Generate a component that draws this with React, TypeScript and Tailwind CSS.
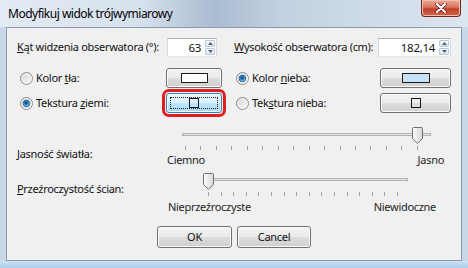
import React from 'react';

// Vista-style radio button
const Radio = ({ checked, id }: { checked?: boolean; id: string }) => (
  <svg width="13" height="13" viewBox="0 0 13 13" className="shrink-0">
    <defs>
      <linearGradient id={`rb-${id}`} x1="0" y1="0" x2="1" y2="1">
        <stop offset="0" stopColor="#cfcfcf" />
        <stop offset="1" stopColor="#ffffff" />
      </linearGradient>
      <radialGradient id={`rd-${id}`} cx="0.45" cy="0.4" r="0.6">
        <stop offset="0" stopColor="#0b3f6b" />
        <stop offset="0.45" stopColor="#2b7fc0" />
        <stop offset="1" stopColor="#a7dcf7" />
      </radialGradient>
    </defs>
    <circle cx="6.5" cy="6.5" r="6" fill={`url(#rb-${id})`} stroke="#8d8d8d" />
    <circle cx="6.5" cy="6.5" r="4.6" fill="none" stroke="#f6f6f6" />
    {checked && <circle cx="6.5" cy="6.5" r="3.4" fill={`url(#rd-${id})`} stroke="#1d5582" strokeWidth="0.8" />}
  </svg>
);

const Arrow = ({ up }: { up?: boolean }) => (
  <svg width="5" height="3" viewBox="0 0 5 3">
    <path d={up ? 'M0 3 L2.5 0 L5 3Z' : 'M0 0 L2.5 3 L5 0Z'} fill="#4d627c" />
  </svg>
);

const Spin = ({ value, className }: { value: string; className: string }) => (
  <div className={`${className} h-[19px] flex bg-white border border-[#abadb3] border-b-[#e3e9ef] border-x-[#d5dae1]`}>
    <div className="flex-1 text-right pr-[3px] leading-[17px] text-[11.5px]">{value}</div>
    <div className="w-[12px] flex flex-col p-[1px] gap-[1px]">
      <div className="flex-1 rounded-[1px] border border-[#b9c8d8] bg-gradient-to-b from-[#f7fafd] to-[#dde7f1] flex items-center justify-center">
        <Arrow up />
      </div>
      <div className="flex-1 rounded-[1px] border border-[#b9c8d8] bg-gradient-to-b from-[#f7fafd] to-[#dde7f1] flex items-center justify-center">
        <Arrow />
      </div>
    </div>
  </div>
);

const btnBase =
  'h-[20px] rounded-[3px] border flex items-center justify-center relative';
const btnNormal =
  'border-[#707070] bg-[linear-gradient(#f3f3f3_0%,#ebebeb_48%,#dddddd_50%,#cfcfcf_100%)] shadow-[inset_0_0_0_1px_#fbfbfb]';
const btnFocus =
  'border-[#3c7fb1] bg-[linear-gradient(#eaf6fd_0%,#d9f0fc_48%,#bee6fd_50%,#a7d9f5_100%)] shadow-[inset_0_0_0_1px_#f4fbff]';

const Thumb = () => (
  <svg width="11" height="17" viewBox="0 0 11 17">
    <defs>
      <linearGradient id="thumbg" x1="0" y1="0" x2="1" y2="0">
        <stop offset="0" stopColor="#fdfdfd" />
        <stop offset="1" stopColor="#d6d6d6" />
      </linearGradient>
    </defs>
    <path d="M1.5 0.5 H9.5 Q10.5 0.5 10.5 1.5 V11.5 L5.5 16.3 L0.5 11.5 V1.5 Q0.5 0.5 1.5 0.5Z" fill="url(#thumbg)" stroke="#6f6f6f" />
  </svg>
);

const Ticks = ({ className }: { className: string }) => (
  <div className={`${className} h-[5px] flex justify-between`}>
    {Array.from({ length: 16 }).map((_, i) => (
      <div key={i} className="w-[1px] h-[4px] bg-[#a3a3a3]" />
    ))}
  </div>
);

export default function App() {
  return (
    <div className="w-[468px] h-[268px] overflow-hidden flex flex-col bg-[#c9d8e8] text-[#111] font-['Noto_Sans',sans-serif] text-[11px] tracking-[-0.3px] whitespace-nowrap">
      {/* title bar */}
      <div className="h-[27px] shrink-0 flex justify-between bg-[linear-gradient(90deg,#e3ebf4_0%,#d6e1ed_30%,#aabcd1_46%,#c2d1e1_60%,#dce6f0_100%)]">
        <div className="pl-[8px] pt-[5px] text-[12px] tracking-[-0.5px] leading-[17px] text-black">Modyfikuj widok trójwymiarowy</div>
        <div className="mr-[7px] w-[40px] h-[17px] rounded-b-[4px] border border-t-0 border-[#6c2a1f] bg-[linear-gradient(#ecaa98_0%,#d87560_45%,#c2412b_55%,#d2654a_100%)] shadow-[inset_0_0_0_1px_#f2bfae] flex items-center justify-center">
          <svg width="12" height="10" viewBox="0 0 12 10">
            <path d="M2 1 L10 9 M10 1 L2 9" stroke="#5a1f16" strokeWidth="3.6" strokeLinecap="round" />
            <path d="M2 1 L10 9 M10 1 L2 9" stroke="#ffffff" strokeWidth="2.2" strokeLinecap="round" />
          </svg>
        </div>
      </div>

      {/* client area */}
      <div className="mx-[6px] h-[234px] shrink-0 border border-[#8a99ab] bg-[#f0f0f0] flex flex-col pl-[10px] pt-[10px]">
        {/* row 1 */}
        <div className="h-[19px] flex items-center">
          <div className="w-[150px]"><u>K</u>ąt widzenia obserwatora (°):</div>
          <Spin value="63" className="w-[50px]" />
          <div className="ml-[17px] w-[144px]"><u>W</u>ysokość obserwatora (cm):</div>
          <Spin value="182,14" className="w-[73px]" />
        </div>

        {/* row 2 */}
        <div className="mt-[11px] h-[20px] flex items-center">
          <div className="w-[149px] flex items-center gap-[3px] pl-[3px]">
            <Radio id="a" />
            <span>Kolor <u>t</u>ła:</span>
          </div>
          <div className={`${btnBase} ${btnNormal} w-[56px]`}>
            <div className="w-[27px] h-[10px] border border-[#1a1a1a] bg-white" />
          </div>
          <div className="ml-[14px] w-[144px] flex items-center gap-[3px]">
            <Radio id="b" checked />
            <span>Kolor <u>n</u>ieba:</span>
          </div>
          <div className={`${btnBase} ${btnNormal} w-[71px]`}>
            <div className="w-[28px] h-[10px] border border-[#1a1a1a] bg-[#c7e1f7]" />
          </div>
        </div>

        {/* row 3 */}
        <div className="mt-[5px] h-[20px] flex items-center">
          <div className="w-[149px] flex items-center gap-[3px] pl-[3px]">
            <Radio id="c" checked />
            <span>Tekstura <u>z</u>iemi:</span>
          </div>
          <div className={`${btnBase} ${btnFocus} w-[56px] outline-[3px] outline-solid outline-[#df1f1f] outline-offset-[1px]`}>
            <div className="absolute inset-[3px] border border-dotted border-[#222]" />
            <div className="w-[10px] h-[10px] border border-[#1a1a1a]" />
          </div>
          <div className="ml-[14px] w-[144px] flex items-center gap-[3px]">
            <Radio id="d" />
            <span>Tek<u>s</u>tura nieba:</span>
          </div>
          <div className={`${btnBase} ${btnNormal} w-[71px]`}>
            <div className="w-[10px] h-[10px] border border-[#1a1a1a]" />
          </div>
        </div>

        {/* slider 1 */}
        <div className="mt-[13px] flex">
          <div className="w-[150px] pt-[20px]"><u>J</u>asność światła:</div>
          <div className="w-[280px] relative">
            <div className="h-[18px] pt-[7px]">
              <div className="ml-[15px] w-[249px] h-[3px] border border-[#b1b1b1] bg-[#e6e6e6]" />
            </div>
            <div className="absolute left-[245px] top-[1px]"><Thumb /></div>
            <Ticks className="mt-[2px] ml-[18px] w-[233px]" />
            <div className="mt-[2px] w-[277px] h-[14px] leading-[14px] flex justify-between text-[#1e1e1e]">
              <span>Ciemno</span>
              <span>Jasno</span>
            </div>
          </div>
        </div>

        {/* slider 2 */}
        <div className="mt-[5px] flex">
          <div className="w-[150px] pt-[9px]"><u>P</u>rzeźroczystość ścian:</div>
          <div className="w-[280px] relative">
            <div className="h-[18px] pt-[6px]">
              <div className="ml-[36px] w-[205px] h-[3px] border border-[#b1b1b1] bg-[#e6e6e6]" />
            </div>
            <div className="absolute left-[36px] top-[1px]"><Thumb /></div>
            <Ticks className="mt-[2px] ml-[41px] w-[190px]" />
            <div className="mt-[3px] pl-[1px] w-[269px] h-[14px] leading-[14px] flex justify-between text-[#1e1e1e]">
              <span>Nieprzeźroczyste</span>
              <span>Niewidoczne</span>
            </div>
          </div>
        </div>

        {/* buttons */}
        <div className="mt-[12px] flex justify-center gap-[5px] pr-[10px]">
          <div className={`${btnBase} ${btnNormal} w-[75px] !h-[22px]`}>OK</div>
          <div className={`${btnBase} ${btnNormal} w-[74px] !h-[22px]`}>Cancel</div>
        </div>
      </div>

      <div className="flex-1 bg-gradient-to-b from-[#cfe3f4] to-[#a9cbea]" />
    </div>
  );
}
